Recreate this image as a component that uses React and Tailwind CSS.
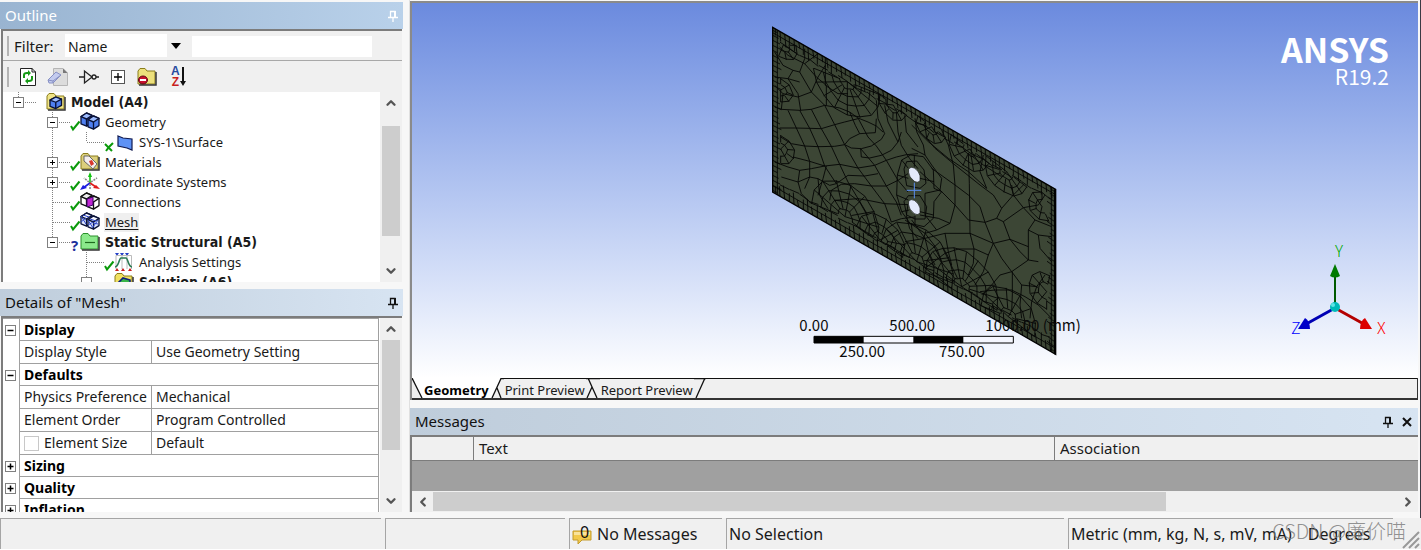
import React from 'react'
import { ChevronUp, ChevronDown, ChevronLeft, ChevronRight } from 'lucide-react'

const treeRows = [
    { id: 1, label: "Model (A4)", guides: [], node: "last", box: "-", icon: "model", bold: true },
    { id: 2, label: "Geometry", guides: ["none"], node: "tee", box: "-", status: "ok", icon: "geometry" },
    { id: 3, label: "SYS-1\\Surface", guides: ["none", "line"], node: "last", status: "hidden", icon: "surface" },
    { id: 4, label: "Materials", guides: ["none"], node: "tee", box: "+", status: "ok", icon: "materials" },
    { id: 5, label: "Coordinate Systems", guides: ["none"], node: "tee", box: "+", status: "ok", icon: "axes" },
    { id: 6, label: "Connections", guides: ["none"], node: "tee", status: "ok", icon: "connections" },
    { id: 7, label: "Mesh", guides: ["none"], node: "tee", status: "ok", icon: "mesh", selected: true },
    { id: 8, label: "Static Structural (A5)", guides: ["none"], node: "last", box: "-", status: "unknown", icon: "structural", bold: true },
    { id: 9, label: "Analysis Settings", guides: ["none", "none"], node: "tee", status: "ok", icon: "settings" },
    { id: 10, label: "Solution (A6)", guides: ["none", "none"], node: "last", box: "-", icon: "solution", bold: true },
]

const detailRows = [
    { group: "Display", box: "-" },
    { name: "Display Style", value: "Use Geometry Setting" },
    { group: "Defaults", box: "-" },
    { name: "Physics Preference", value: "Mechanical" },
    { name: "Element Order", value: "Program Controlled" },
    { name: "Element Size", value: "Default", checkbox: true },
    { group: "Sizing", box: "+" },
    { group: "Quality", box: "+" },
    { group: "Inflation", box: "+" },
]

// interior element edges, left half of the plate
const leftEdges = [
    "40,262 95,265 130,262 170,250 215,258 245,270 270,288 300,300 325,312 345,330",
    "35,318 80,318 125,319 160,320 200,308 230,300 270,290",
    "38,345 70,365 110,372 150,374 200,373 230,368 250,378 280,380 310,372 340,352 350,335",
    "230,368 245,350 275,335 322,332 325,290",
    "278,380 280,405 305,408 340,400 370,385 390,360 400,330",
    "75,405 125,418 170,432 215,427 270,438 320,430 355,415 385,405 415,398 450,395",
    "20,420 60,435 95,445 130,440 170,432",
    "95,445 90,480 100,515 130,545",
    "40,465 90,480 125,465 150,470 185,490 205,485 240,460 290,462 330,455",
    "185,535 190,505 220,487 260,485 310,492 355,492 390,475 420,455",
    "200,535 270,530 300,535 350,545 420,548",
    "60,265 85,318 110,372 125,418 125,465 110,500",
    "95,265 125,319 150,374 170,432 205,485",
    "130,262 160,320 190,373 215,427 240,480 270,530 300,580",
    "170,250 200,308 230,368 270,438 310,492 350,545 370,600",
    "245,270 262,310 275,335",
    "270,288 300,345 325,372 355,415 390,475 420,510",
    "278,380 320,430 355,492 385,540 400,580",
    "110,80 110,110 95,150 130,210 170,250",
    "35,75 60,100 110,125 150,95",
    "110,125 145,165 175,190 175,250",
    "172,100 172,190 210,215 240,215",
    "130,210 150,165 172,130",
    "20,90 45,130 75,145 95,150",
    "75,145 60,170 90,215 98,265",
    "20,165 60,170 95,180",
    "20,190 45,215 90,225 130,210",
    "45,215 40,262 20,255",
    "150,470 155,520 180,560",
    "175,432 165,470 150,520",
    "385,270 390,330 400,370 425,410 450,440",
    "350,250 360,300 390,360",
    "325,235 330,290 350,335",
    "410,280 415,330 450,375",
    "370,600 400,590 440,585",
    "420,548 415,580 425,620 450,650",
]

// interior element edges, right half of the plate
const rightEdges = [
    "190,145 193,235 195,385",
    "0,345 60,385 95,375 135,355 150,300 150,240 145,180 130,120 110,75",
    "60,265 105,255 110,220 80,180 60,150 20,130",
    "0,410 60,400 120,385 195,385 265,415 315,403 370,425",
    "195,385 207,432 205,475 190,510",
    "265,415 240,352 225,305 190,270 150,240 80,190",
    "315,403 295,350 275,340 240,352 190,345 150,300",
    "275,340 290,310 265,270 225,240 150,180 90,130",
    "295,350 355,308 325,270 320,240",
    "290,310 325,270 355,240",
    "355,308 390,345 370,375 370,465 320,500",
    "265,415 290,460 320,500 350,540 395,545 420,510",
    "265,415 250,450 210,432 160,432 120,445 60,490",
    "250,450 235,500 210,540",
    "315,403 345,440 370,465 400,470",
    "320,500 285,510 260,540 230,570",
    "322,500 322,570 320,620",
    "225,560 270,555 320,555 360,575 400,600 440,640",
    "370,375 400,390 440,395",
    "400,390 405,430 440,470",
    "235,150 225,200 245,250",
    "190,145 235,180 290,215",
    "45,200 105,255 150,300",
    "20,60 70,110 130,160 190,200 245,250",
    "30,40 35,80 55,120 60,150",
    "60,60 65,100 90,130",
    "60,265 60,330 95,375",
    "45,330 100,340 135,355",
    "20,345 60,400 70,440 90,480",
    "60,385 95,430 110,470",
    "120,385 130,440 140,480",
    "355,308 400,300 420,270",
    "390,345 440,365",
    "395,545 380,590 375,640",
    "350,540 345,600 350,640",
]

// half rings with spokes where the elements get smaller near the border
const fans = [
    [262, 200, [22, 44, 70, 100], 0, 180, 8],
    [400, 270, [22, 44], 20, 200, 5],
    [515, 335, [22, 46], 20, 200, 6],
    [630, 402, [20, 42, 62], 20, 200, 6],
    [740, 470, [22, 44, 66], 20, 200, 7],
    [605, 815, [24, 48, 76, 110], 180, 375, 10],
    [255, 605, [22, 46, 74, 102], 180, 380, 8],
    [360, 675, [22, 48, 74], 190, 380, 6],
    [470, 740, [24, 52, 82, 110], 190, 380, 8],
    [745, 905, [24, 52, 84], 180, 380, 7],
    [846, 575, [20, 42], 60, 270, 5],
    [62, 402, [20, 42], -90, 90, 5],
    [62, 225, [18, 36], -90, 90, 4],
    [860, 830, [26, 54], 90, 280, 6],
    [70, 90, [20, 42], -20, 110, 4],
]

function fanPath([cx, cy, radii, from, to, spokes]) {
    const point = (r, deg) => {
        const a = deg * Math.PI / 180
        const x = cx + r * Math.cos(a)
        const y = cy + r * Math.sin(a) + 0.4 * (x - cx)
        return `${x.toFixed(1)},${y.toFixed(1)}`
    }
    const step = (to - from) / spokes
    let d = ""
    radii.forEach((r) => {
        for (let i = 0; i <= spokes; i++) {
            const wobble = r + (i * 7 % 3 - 1) * 2
            d += `${i === 0 ? "M" : "L"}${point(wobble, from + step * i)}`
        }
    })
    for (let i = 0; i <= spokes; i++) {
        const start = i % 3 === 1 ? 0 : radii[0]
        d += `M${point(start, from + step * i)}L${point(radii[radii.length - 1], from + step * i)}`
    }
    return d
}

function borderPath() {
    const slope = 486 / 849
    let d = "M38,53L887,539M38,512L887,1000M874,515V1010M52,46V540"
    for (let i = 0; i < 60; i++) {
        const x = 46 + i * 14
        const top = 37 + (x - 38) * slope
        const len = 20 + (i * 7 % 5) * 5
        d += `M${x},${top}L${x + (i % 3) * 2},${top + len}`
        d += `M${x},${top + 494}L${x - (i % 3) * 2},${top + 494 - len}`
    }
    // second, looser row of elements
    for (let i = 0; i < 28; i++) {
        const x = 60 + i * 29
        const top = 37 + (x - 38) * slope
        d += `M${x},${top + 32 + (i % 3) * 3}L${x + 28},${top + 50 + (i % 2) * 5}`
        d += `M${x},${top + 460 - (i % 3) * 3}L${x + 28},${top + 474 - (i % 2) * 5}`
    }
    for (let i = 0; i < 34; i++) {
        const y = 46 + i * 15
        const len = 14 + (i * 5 % 4) * 4
        d += `M38,${y}L${38 + len},${y + len * 0.5}`
        d += `M887,${y + 486}L${887 - len},${y + 486 - len * 0.7}`
    }
    return d
}

const borderEdges = borderPath()
const fanEdges = fans.map(fanPath).join("")

function Plate() {
    return (
        <svg
            className="absolute left-1/2 top-[12px] -translate-x-1/2 overflow-visible"
            width="310"
            height="350"
            viewBox="0 0 930 1050"
            fill="none"
        >
            <clipPath id="plate">
                <path d="M38,37L887,523V1018L38,531Z" />
            </clipPath>
            <path d="M38,37L887,523V1018L38,531Z" fill="#3c4635" />
            <g clipPath="url(#plate)" stroke="#060806" strokeWidth="2.8">
                <path d={borderEdges} />
                <path d={fanEdges} />
                <g transform="translate(24 21)">
                    {leftEdges.map((p) => <polyline key={p} points={p} />)}
                </g>
                <g transform="translate(435 270)">
                    {rightEdges.map((p) => <polyline key={p} points={p} />)}
                </g>
                <path d="M432,462L440,440L470,438L492,465L498,505L480,520L440,512ZM412,480L425,435L452,420L490,425L520,465L522,520L545,530L522,560L520,610L492,635L450,625L425,590L410,540ZM432,560L445,542H480L500,575L495,612L465,612L440,600Z" />
                <path d="M412,480L445,490M410,540L445,555M480,490L522,500M480,590L520,600M425,435L445,460M425,590L448,585M463,420V455M465,602V630" />
            </g>
            <path d="M38,37L887,523V1018L38,531Z" stroke="#000" strokeWidth="4" />
            <path d="M885,523V1018" stroke="#000" strokeWidth="6" />
            <g fill="#e4eafc" stroke="#10140e" strokeWidth="2">
                <path d="M446,462Q452,453 463,459Q477,468 480,482V498Q472,505 463,499Q446,486 446,472Z" />
                <path d="M446,559Q452,550 463,556Q477,565 480,579V595Q472,602 463,596Q446,583 446,569Z" />
            </g>
            <path d="M440,526H484M463,503V550" stroke="#5b8def" strokeWidth="3" />
            <path d="M162,964H760V984H162Z" fill="#f4f6fe" stroke="#000" strokeWidth="3" />
            <path d="M162,964H311V984H162ZM460,964H610V984H460Z" fill="#000" />
            <g fill="#0a0a0a" className="font-['Noto_Sans_CJK_SC',sans-serif] text-[45px]">
                <text x="118" y="947">0.00</text>
                <text x="388" y="947">500.00</text>
                <text x="676" y="947">1000.00 (mm)</text>
                <text x="238" y="1026">250.00</text>
                <text x="537" y="1026">750.00</text>
            </g>
        </svg>
    )
}

function Triad() {
    return (
        <svg className="absolute bottom-[36px] right-[26px] overflow-visible" width="106" height="100" viewBox="0 0 106 100">
            <path d="M49,66V32" stroke="#005a00" strokeWidth="2" />
            <path d="M49,66L22,81" stroke="#0000b4" strokeWidth="3" />
            <path d="M49,66L76,81" stroke="#b40000" strokeWidth="3" />
            <path d="M49,22L54,34Q49,37 44,34Z" fill="#007a00" />
            <path d="M12,87L19,76Q24,79 24,87Z" fill="#0000c8" />
            <path d="M86,87L79,76Q74,79 74,87Z" fill="#dc0000" />
            <circle cx="49" cy="65" r="5" fill="#00b9b9" />
            <circle cx="47" cy="63" r="2" fill="#5fe6e6" />
            <g className="font-['Noto_Sans_CJK_SC',sans-serif] text-[16px] font-light">
                <text x="49" y="15" fill="#00aa00">Y</text>
                <text x="91" y="92" fill="#ff0000">X</text>
                <text x="5" y="92" fill="#0000ff">Z</text>
            </g>
        </svg>
    )
}

function Connector({ type, box }) {
    return (
        <svg width="34" height="20" viewBox="0 0 34 20" fill="none" className="shrink-0">
            {type !== "none" && (
                <path
                    d={type === "last" ? "M15.5 0V10" : "M15.5 0V20"}
                    stroke="#808080"
                    strokeDasharray="1 1"
                />
            )}
            {(type === "tee" || type === "last") && (
                <path d="M16 10.5H34" stroke="#808080" strokeDasharray="1 1" />
            )}
            {box && <rect x="10.5" y="5.5" width="10" height="10" fill="#fff" stroke="#808080" />}
            {box && <path d={box === "+" ? "M13 10.5H18M15.5 8V13" : "M13 10.5H18"} stroke="#000" />}
        </svg>
    )
}

function Status({ type }) {
    return (
        <svg width="9" height="20" viewBox="0 0 9 20" fill="none" className="shrink-0 overflow-visible">
            {type === "ok" && <path d="M0 14L2 17.500L8.500 9.500" stroke="#0a9a0a" strokeWidth="2" />}
            {type === "hidden" && <path d="M0 12L3 15L7 19M1 19L4 15L8 11" stroke="#0a9a0a" strokeWidth="2" />}
            {type === "unknown" && (
                <text x="0" y="19" fill="#1c2f9c" className="font-['Noto_Sans',sans-serif] text-[15px] font-bold">?</text>
            )}
        </svg>
    )
}

function Folder({ color, edge }) {
    return (
        <g>
            <path d="M1 4L3 1.500H8L10 4H18V17H1Z" fill={color} stroke={edge} />
            <path d="M2 18H19V5" stroke="#333" strokeWidth="1.500" />
        </g>
    )
}

function Cube({ fill = "#4f7ff0", face = "#9dbcff", stroke = "#0a1238" }) {
    return (
        <g stroke={stroke} strokeWidth="1.200" strokeLinejoin="round">
            <path d="M0 3L5 0L10 2V8L5 11L0 9Z" fill={fill} />
            <path d="M0 3L5 0L10 2L5 5Z" fill={face} />
            <path d="M5 5V11" />
        </g>
    )
}

const treeIcons = {
    model: (
        <g>
            <Folder color="#f0e487" edge="#8a7d1c" />
            <g transform="translate(4 5) scale(1.150 1.050)"><Cube /></g>
        </g>
    ),
    geometry: (
        <g>
            <g transform="translate(1 1) scale(1.100 1.200)"><Cube /></g>
            <g transform="translate(8 4) scale(1.100 1.200)"><Cube /></g>
        </g>
    ),
    surface: <path d="M4 4L9 6L18 7V18L13 16L4 14Z" fill="#5e92f5" stroke="#101a50" strokeWidth="1.200" />,
    materials: (
        <g>
            <Folder color="#dccf7c" edge="#8a7d1c" />
            <path d="M4 4L9 4L17 12L13 17L4 9Z" fill="#f4eeee" stroke="#666" />
            <path d="M9 9L12 8L14 12L11 14Z" fill="#d8352c" />
        </g>
    ),
    axes: (
        <g strokeWidth="1.600">
            <path d="M10 11V2" stroke="#12c412" />
            <path d="M10 0L12 5H8Z" fill="#12c412" />
            <path d="M10 11L3 16" stroke="#1c1ce0" />
            <path d="M0 18L3 13L7 16Z" fill="#1c1ce0" />
            <path d="M10 11L16 15" stroke="#e01c1c" />
            <path d="M20 17L16 13L13 16Z" fill="#e01c1c" />
            <path d="M10 12V18M11 10L17 6M9 10L4 6" stroke="#888" strokeDasharray="2 1" />
        </g>
    ),
    connections: (
        <g>
            <g transform="translate(1 1) scale(1.100 1.200)"><Cube fill="#fff" face="#eee" stroke="#111" /></g>
            <g transform="translate(8 4) scale(1.100 1.200)"><Cube fill="#fff" face="#eee" stroke="#111" /></g>
            <path d="M7 7L13 5V13L7 15Z" fill="#c026d3" stroke="#3b0764" />
        </g>
    ),
    mesh: (
        <g>
            <g transform="translate(1 1) scale(1.100 1.200)"><Cube fill="#dbe4ff" face="#f1f4ff" /></g>
            <g transform="translate(8 4) scale(1.100 1.200)"><Cube fill="#dbe4ff" face="#f1f4ff" /></g>
            <path d="M1 4L6 12M6 6L1 10M8 8L13 16M13 10L8 13M18 8L13 15M13 11L18 12M3 3L9 5M10 7L16 9" stroke="#2b45c8" />
        </g>
    ),
    structural: (
        <g>
            <Folder color="#8be98b" edge="#2c8f2c" />
            <path d="M5 10.500H15" stroke="#1d6b1d" strokeWidth="1.200" />
        </g>
    ),
    settings: (
        <g>
            <path d="M1 1H5L3 4ZM6 1H10L8 4ZM11 1H15L13 4Z" fill="#2540c8" />
            <path d="M2 3.500H17.500V17M2 3.500V17M8 4V17M13 4V17" stroke="#bbb" />
            <path d="M1 15C5 15 5 6 7 6H12C14 6 14 15 18 15" stroke="#2a7a52" strokeWidth="1.600" />
            <path d="M1 19L3 16L5 19ZM7 19L9 16L11 19ZM14 19L16 16L18 19Z" fill="#c81e1e" />
        </g>
    ),
    solution: (
        <g>
            <Folder color="#f0e060" edge="#8a7d1c" />
            <path d="M4 11L9 6L16 8V15L9 17Z" fill="#3ab54a" stroke="#10207a" strokeWidth="1.600" />
        </g>
    ),
}

function TreeRow({ row }) {
    return (
        <li className="flex h-5 items-center">
            {row.guides.map((guide, i) => <Connector key={i} type={guide} />)}
            <Connector type={row.node} box={row.box} />
            <Status type={row.status} />
            <svg width="20" height="20" viewBox="0 0 20 20" fill="none" className="shrink-0">
                {treeIcons[row.icon]}
            </svg>
            <span
                className={`ml-1 whitespace-nowrap px-px leading-[19px] ${row.bold ? "font-['DejaVu_Sans_Condensed','Noto_Sans',sans-serif] text-[14px] font-bold" : "text-[13px]"} ${row.selected ? "bg-[#efefef] underline underline-offset-2" : ""}`}
            >
                {row.label}
            </span>
        </li>
    )
}

function Pin() {
    return (
        <svg width="10" height="12" viewBox="0 0 10 12" fill="none" stroke="currentColor">
            <path d="M2.500 7V1.500H7V7M0 7.500H10M5 8V12" strokeWidth="1.300" />
            <path d="M7 1V7" strokeWidth="2" />
        </svg>
    )
}

function PanelHeader({ title, active, closable }) {
    return (
        <div
            className={`flex h-[27px] shrink-0 items-center justify-between bg-linear-to-r pl-[5px] text-[15px] ${active ? "from-[#99b4d1] to-[#b9d1ea] text-white" : "from-[#bfcddb] to-[#d7e4f2] text-[#111]"}`}
        >
            <h2>{title}</h2>
            <div className="flex items-center gap-2 pr-[5px]">
                <button type="button" aria-label="Auto hide"><Pin /></button>
                {closable && (
                    <button type="button" aria-label="Close">
                        <svg width="12" height="12" viewBox="0 0 12 12" stroke="currentColor" strokeWidth="2">
                            <path d="M2 2L10 10M10 2L2 10" />
                        </svg>
                    </button>
                )}
            </div>
        </div>
    )
}

function VerticalScroll({ thumb }) {
    return (
        <div className="flex w-[22px] shrink-0 flex-col items-center bg-[#f0f0f0] text-[#555]">
            <button type="button" aria-label="Scroll up" className="flex h-[22px] items-center">
                <ChevronUp size={14} strokeWidth={4} />
            </button>
            <div className="flex min-h-0 w-[18px] flex-1 flex-col">
                <div className={`bg-[#cdcdcd] ${thumb}`} />
            </div>
            <button type="button" aria-label="Scroll down" className="flex h-[22px] items-center">
                <ChevronDown size={14} strokeWidth={4} />
            </button>
        </div>
    )
}

function Toolbar() {
    return (
        <div className="flex h-[31px] shrink-0 items-center gap-[10px] bg-[#f0f0f0] pl-1">
            <span className="h-5 w-[2px] bg-[#b4b4b4]" />
            <button type="button" aria-label="Refresh">
                <svg width="18" height="20" viewBox="0 0 18 20" fill="none">
                    <path d="M1.500 1.500H13L16.500 5V18.500H1.500Z" fill="#fff" stroke="#222" />
                    <path d="M13 1V5H17" stroke="#222" />
                    <path d="M5 11V8Q5 6 8 6H9M13 9V12Q13 14 10 14H9" stroke="#169a16" strokeWidth="2" />
                    <path d="M9 3L12 6L9 9ZM9 11L6 14L9 17Z" fill="#169a16" />
                </svg>
            </button>
            <button type="button" aria-label="Clear">
                <svg width="22" height="20" viewBox="0 0 22 20" fill="none">
                    <path d="M6.500 1.500H16L20.500 6V18.500H6.500Z" fill="#dcdcdc" stroke="#b5b5b5" />
                    <path d="M16 1.500V6H20.500Z" fill="#777" />
                    <path d="M1 13L9 5L14 8L6 16L2 16Z" fill="#c3cbee" stroke="#8790c4" />
                    <path d="M1 13L6 14L14 8M6 14V16" stroke="#8790c4" />
                </svg>
            </button>
            <button type="button" aria-label="Go to">
                <svg width="20" height="20" viewBox="0 0 20 20" fill="none" stroke="#222" strokeWidth="1.300">
                    <path d="M0 10H5M5.500 4V16L13 10ZM17 10H20" />
                    <circle cx="15" cy="10" r="2" />
                </svg>
            </button>
            <button type="button" aria-label="Expand all" className="px-[2px]">
                <svg width="14" height="14" viewBox="0 0 14 14" fill="none">
                    <rect x=".5" y=".5" width="13" height="13" fill="#fff" stroke="#555" />
                    <path d="M3 7H11M7 3V11" stroke="#000" strokeWidth="1.300" />
                </svg>
            </button>
            <button type="button" aria-label="Collapse folder">
                <svg width="20" height="20" viewBox="0 0 20 20" fill="none">
                    <Folder color="#ece07c" edge="#8a7d1c" />
                    <ellipse cx="6" cy="13" rx="4.500" ry="4" fill="#c8102e" stroke="#5c0613" />
                    <path d="M3 13H9" stroke="#fff" strokeWidth="2" />
                </svg>
            </button>
            <button type="button" aria-label="Sort" className="flex items-center pl-1">
                <span className="flex flex-col font-['Liberation_Sans',sans-serif] text-[12px] font-bold leading-[11px]">
                    <span className="text-[#274b9f]">A</span>
                    <span className="text-[#c81e1e]">Z</span>
                </span>
                <svg width="6" height="20" viewBox="0 0 6 20">
                    <path d="M2 0H4V14H6L3 19L0 14H2Z" fill="#111" />
                </svg>
            </button>
        </div>
    )
}

function Outline() {
    return (
        <section className="flex min-h-0 flex-[280] flex-col">
            <PanelHeader title="Outline" active />
            <div className="mx-px flex min-h-0 flex-1 flex-col border-l-2 border-t-2 border-[#7c7c7c]">
                <div className="flex h-[30px] shrink-0 items-center border-b border-[#a8a8a8] bg-[#f0f0f0] pl-1 pt-px">
                    <span className="mr-[5px] h-5 w-[2px] bg-[#b4b4b4]" />
                    <label htmlFor="filter-by" className="w-[51px] text-[15px]">Filter:</label>
                    <div className="relative w-[119px]">
                        <select
                            id="filter-by"
                            className="h-[23px] w-full appearance-none bg-white pl-[3px] pt-[2px] text-[14px] outline-none"
                            defaultValue="Name"
                        >
                            <option>Name</option>
                        </select>
                        <span className="pointer-events-none absolute right-0 top-0 flex h-full w-[17px] items-center justify-center bg-[#f0f0f0]">
                            <svg width="10" height="6" viewBox="0 0 10 6"><path d="M0 0H10L5 6Z" fill="#000" /></svg>
                        </span>
                    </div>
                    <input aria-label="Filter text" className="ml-2 mr-[30px] h-[21px] min-w-0 flex-1 bg-white outline-none" />
                </div>
                <Toolbar />
                <div className="flex min-h-0 flex-1 bg-white">
                    <ul className="min-w-0 flex-1 overflow-hidden">
                        {treeRows.map((row) => <TreeRow key={row.id} row={row} />)}
                    </ul>
                    <VerticalScroll thumb="mt-[12px] h-[110px]" />
                </div>
            </div>
        </section>
    )
}

function Details() {
    return (
        <section className="flex min-h-0 flex-[223] flex-col">
            <PanelHeader title={'Details of "Mesh"'} />
            <div className="mx-px flex min-h-0 flex-1 border-l-2 border-t-2 border-[#7c7c7c] bg-white">
                <div className="mr-px min-w-0 flex-1 overflow-hidden">
                    <table className="w-full table-fixed border-separate border-spacing-0 border-t border-[#a0a0a0] text-[14px] leading-[20px]">
                        <colgroup>
                            <col className="w-4" />
                            <col className="w-[132px]" />
                            <col />
                        </colgroup>
                        <tbody>
                            {detailRows.map((row) => row.group ? (
                                <tr key={row.group} className="h-[22px]">
                                    <td className="p-0">
                                        <button type="button" aria-label={`Toggle ${row.group}`} className="ml-[2px] flex">
                                            <svg width="11" height="11" viewBox="0 0 11 11" fill="none">
                                                <rect x=".5" y=".5" width="10" height="10" fill="#fff" stroke="#808080" />
                                                <path d={row.box === "+" ? "M2.500 5.500H8.500M5.500 2.500V8.500" : "M2.500 5.500H8.500"} stroke="#000" strokeWidth="1.500" />
                                            </svg>
                                        </button>
                                    </td>
                                    <th colSpan={2} className="border-b border-l border-r border-[#a0a0a0] p-0 pl-1 text-left font-bold text-black">
                                        {row.group}
                                    </th>
                                </tr>
                            ) : (
                                <tr key={row.name} className="h-[23px]">
                                    <td className="p-0" />
                                    <td className="whitespace-nowrap border-b border-l border-[#a0a0a0] p-0 pl-1">
                                        {row.checkbox ? (
                                            <label className="flex items-center gap-[5px]">
                                                <input type="checkbox" className="h-[15px] w-[15px] appearance-none border border-[#c8c8c8] bg-white" />
                                                {row.name}
                                            </label>
                                        ) : row.name}
                                    </td>
                                    <td className="border-b border-l border-r border-[#a0a0a0] p-0 pl-1">{row.value}</td>
                                </tr>
                            ))}
                        </tbody>
                    </table>
                </div>
                <VerticalScroll thumb="h-[110px]" />
            </div>
        </section>
    )
}

function ViewTabs() {
    return (
        <div className="flex h-[22px] shrink-0 border-b-2 border-r border-[#333] bg-[#f0f0f0] text-[13px]">
            <svg width="11" height="20" viewBox="0 0 11 20" fill="none">
                <path d="M0 0H11V20H10Z" fill="#fff" />
                <path d="M0 0L10 20" stroke="#111" strokeWidth="1.300" />
            </svg>
            <button type="button" className="bg-white px-px pt-[3px] font-bold text-black">Geometry</button>
            <svg width="14" height="20" viewBox="0 0 14 20" fill="none">
                <path d="M0 0H11L2 20H0Z" fill="#fff" />
                <path d="M2 20L11 .5H14M7 10L11 20" stroke="#111" strokeWidth="1.300" />
            </svg>
            <button type="button" className="border-t border-[#111] px-px pt-[2px]">Print Preview</button>
            <svg width="14" height="20" viewBox="0 0 14 20" fill="none">
                <path d="M0 .5H14M1 20L6 9M2 0L11 20" stroke="#111" strokeWidth="1.300" />
            </svg>
            <button type="button" className="border-t border-[#111] px-px pt-[2px]">Report Preview</button>
            <svg width="12" height="20" viewBox="0 0 12 20" fill="none">
                <path d="M0 .5H12M2 20L11 0" stroke="#111" strokeWidth="1.300" />
            </svg>
            <div className="flex-1 border-t border-[#111]" />
        </div>
    )
}

function Viewport() {
    return (
        <section className="flex min-h-0 flex-[400] flex-col border-l-2 border-t-2 border-[#8a8a8a]">
            <div className="relative min-h-0 flex-1 overflow-hidden bg-linear-to-b from-[#6b8ade] to-white">
                <Plate />
                <div className="absolute right-[29px] top-[28px] text-right font-['Noto_Sans_CJK_SC',sans-serif] text-white">
                    <p className="text-[34px] font-bold leading-[35px]">ANSYS</p>
                    <p className="text-[21px] leading-[21px]">R19.2</p>
                </div>
                <Triad />
            </div>
            <ViewTabs />
        </section>
    )
}

function Messages() {
    return (
        <section className="flex h-[104px] shrink-0 flex-col">
            <PanelHeader title="Messages" closable />
            <div className="flex min-h-0 flex-1 flex-col border-l-2 border-t-2 border-[#7c7c7c] bg-[#a0a0a0]">
                <table className="w-full table-fixed border-separate border-spacing-0 bg-[#f0f0f0] text-[15px]">
                    <colgroup>
                        <col className="w-[62px]" />
                        <col className="w-[581px]" />
                        <col />
                    </colgroup>
                    <thead>
                        <tr className="h-6">
                            <th className="border-b border-r border-[#7c7c7c] p-0" aria-label="Severity" />
                            <th className="border-b border-r border-[#7c7c7c] p-0 pl-[5px] text-left font-normal">Text</th>
                            <th className="border-b border-[#7c7c7c] p-0 pl-[5px] text-left font-normal">Association</th>
                        </tr>
                    </thead>
                </table>
                <div className="flex-1" />
                <div className="flex h-[21px] items-center bg-[#f0f0f0] text-[#555]">
                    <button type="button" aria-label="Scroll left" className="flex w-[21px] justify-center">
                        <ChevronLeft size={14} strokeWidth={4} />
                    </button>
                    <div className="flex-1">
                        <div className="h-[19px] w-[76%] bg-[#cdcdcd]" />
                    </div>
                    <button type="button" aria-label="Scroll right" className="flex w-[21px] justify-center">
                        <ChevronRight size={14} strokeWidth={4} />
                    </button>
                </div>
            </div>
        </section>
    )
}

function StatusBar() {
    const cell = "flex items-center whitespace-nowrap border-l border-t border-[#a5a5a5] pl-[2px]"
    return (
        <footer className="relative flex h-8 shrink-0 gap-1 border-b border-white bg-[#f0f0f0] text-[16px]">
            <div className={`${cell} w-[381px]`} />
            <div className={`${cell} w-[180px]`} />
            <div className={`${cell} w-[153px] gap-1`}>
                <svg width="21" height="22" viewBox="0 0 21 22" fill="none">
                    <path d="M1 8H19V17H10L6 21V17H1Z" fill="#f2c94a" stroke="#c29a2c" />
                    <path d="M2 9H18V12H2Z" fill="#f9e39a" />
                    <text x="8" y="15" fill="#111" className="font-['Noto_Sans',sans-serif] text-[16px]">0</text>
                </svg>
                No Messages
            </div>
            <div className={`${cell} w-[338px]`}>No Selection</div>
            <div className={`${cell} min-w-0 flex-1 gap-4`}>
                <span>Metric (mm, kg, N, s, mV, mA)</span>
                <span>Degrees</span>
            </div>
            <svg width="24" height="31" viewBox="0 0 24 31" stroke="#999" strokeWidth="2" className="shrink-0">
                <path d="M6 30L22 14M12 30L22 20M18 30L22 26" />
            </svg>
            <span className="absolute right-[15px] top-0 font-['Noto_Sans_CJK_SC',sans-serif] text-[20px] font-light leading-[26px] text-[#777]/80">
                CSDN @廉价喵
            </span>
        </footer>
    )
}

export default function App() {
    return (
        <div className="flex h-screen flex-col overflow-hidden bg-[#f7f7f7] font-['Noto_Sans','Noto_Sans_CJK_SC',sans-serif] text-[#1a1a1a]">
            <div className="flex min-h-0 flex-1 gap-[6px] border-r border-[#3a3a44] pb-[6px]">
                <aside className="flex w-[403px] shrink-0 flex-col gap-[7px] pt-[2px]">
                    <Outline />
                    <Details />
                </aside>
                <main className="flex min-w-0 flex-1 flex-col gap-2 border-l border-[#e0e0e0] pr-[2px] pt-px">
                    <Viewport />
                    <Messages />
                </main>
            </div>
            <StatusBar />
        </div>
    )
}
